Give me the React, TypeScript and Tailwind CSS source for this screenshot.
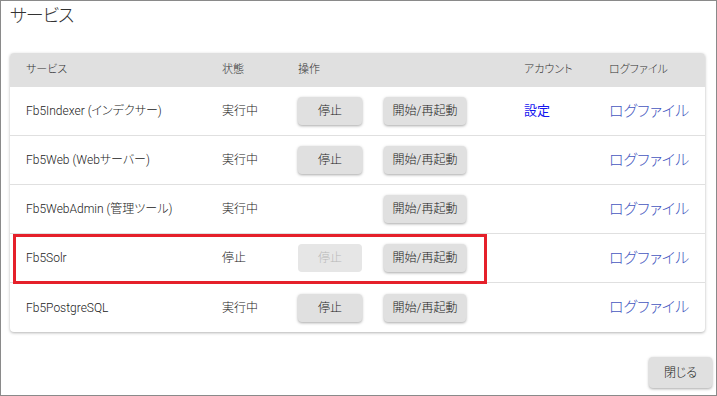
import React from 'react';

type Service = {
  name: string;
  status: string;
  canStop: boolean;
  stopDisabled?: boolean;
  account?: boolean;
};

const services: Service[] = [
  { name: 'Fb5Indexer (インデクサー)', status: '実行中', canStop: true, account: true },
  { name: 'Fb5Web (Webサーバー)', status: '実行中', canStop: true },
  { name: 'Fb5WebAdmin (管理ツール)', status: '実行中', canStop: false },
  { name: 'Fb5Solr', status: '停止', canStop: true, stopDisabled: true },
  { name: 'Fb5PostgreSQL', status: '実行中', canStop: true },
];

const cols = 'grid grid-cols-[196px_76px_86px_140px_85px_1fr] items-center px-4';

const Btn = ({ label, width, disabled }: { label: string; width: string; disabled?: boolean }) => (
  <button
    disabled={disabled}
    className={
      disabled
        ? `${width} h-7 rounded-[4px] bg-[#e6e6e6] text-[#b8b8b8] text-xs font-light`
        : `${width} h-7 rounded-[4px] bg-[#e0e0e0] text-[#222] text-xs font-light shadow-[0_1px_3px_rgba(0,0,0,0.35)]`
    }
  >
    {label}
  </button>
);

const App = () => {
  return (
    <div
      className="relative w-[717px] h-[396px] bg-white border border-[#8a8a8a] flex flex-col [font-feature-settings:'palt']"
      style={{ fontFamily: 'Roboto, "Noto Sans CJK JP", sans-serif' }}
    >
      <h1 className="px-[9px] pt-[2px] text-[18px] leading-[26px] tracking-[-1px] font-light text-[#333]">サービス</h1>

      <div className="ml-[9px] mt-[24px] w-[695px] rounded-[4px] bg-white shadow-[0_1px_3px_rgba(0,0,0,0.3)]">
        <div className={`${cols} h-[34px] bg-[#e0e0e0] rounded-t-[4px] text-[11px] font-light text-[#333]`}>
          <span>サービス</span>
          <span>状態</span>
          <span>操作</span>
          <span></span>
          <span>アカウント</span>
          <span>ログファイル</span>
        </div>

        {services.map((s, i) => (
          <div
            key={s.name}
            className={`${cols} h-[49px] text-[12px] font-light text-[#222] ${i < services.length - 1 ? 'border-b border-[#e0e0e0]' : ''}`}
          >
            <span className="whitespace-nowrap">{s.name}</span>
            <span>{s.status}</span>
            <span>{s.canStop && <Btn label="停止" width="w-16" disabled={s.stopDisabled} />}</span>
            <span>
              <Btn label="開始/再起動" width="w-[82px]" />
            </span>
            <span className="text-[#1515f0] text-[13px] font-normal">{s.account ? '設定' : ''}</span>
            <span className="text-[#4657c0] text-[15px] whitespace-nowrap">ログファイル</span>
          </div>
        ))}
      </div>

      <div className="flex justify-end mt-[25px] mr-[4px]">
        <button className="w-[63px] h-[31px] rounded-[4px] bg-[#e0e0e0] text-[#222] text-xs font-light shadow-[0_1px_3px_rgba(0,0,0,0.35)]">
          閉じる
        </button>
      </div>

      {/* annotation box */}
      <div className="absolute left-[12px] top-[233px] w-[474px] h-[50px] border-[3px] border-[#e5202a] pointer-events-none" />
    </div>
  );
};

export default App;
